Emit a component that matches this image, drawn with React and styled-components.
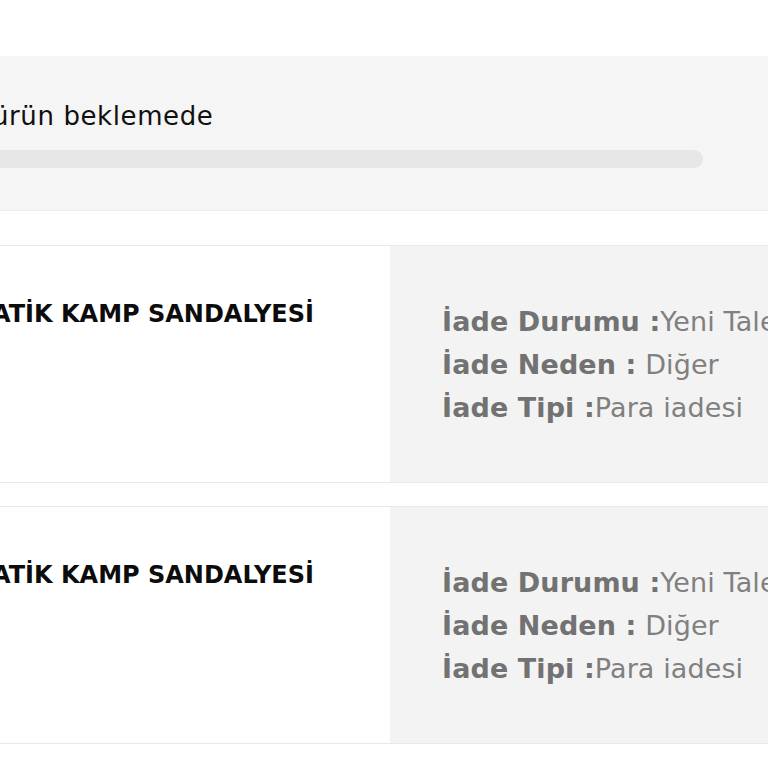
import React from 'react';
import styled, { createGlobalStyle } from 'styled-components';

const GlobalStyle = createGlobalStyle`
  html, body {
    margin: 0;
    padding: 0;
    background: #ffffff;
    overflow: hidden;
  }
  body {
    font-family: "DejaVu Sans", "Open Sans", sans-serif;
  }
`;

// the screenshot is a scrolled view, so the page sits a little left of the window
const Page = styled.div`
  width: 830px;
  margin-left: -8px;
  padding-top: 56px;
  display: flex;
  flex-direction: column;
`;

const StatusPanel = styled.div`
  background-color: #f5f5f5;
  border-bottom: 1px solid #ebebeb;
  height: 155px;
  padding-top: 42px;
  box-sizing: border-box;
  display: flex;
  flex-direction: column;
  gap: 16px;
`;

const StatusText = styled.div`
  font-size: 26px;
  line-height: 36px;
  color: #111111;
  font-weight: 400;
  letter-spacing: 0.6px;
`;

const Progress = styled.div`
  width: 711px;
  height: 18px;
  border-radius: 9px;
  background-color: #e6e6e6;
`;

const List = styled.div`
  margin-top: 34px;
  display: flex;
  flex-direction: column;
  gap: 23px;
`;

const Card = styled.div`
  display: flex;
  height: 238px;
  border-top: 1px solid #e9e9e9;
  border-bottom: 1px solid #e9e9e9;
  box-sizing: border-box;
`;

const ProductCol = styled.div`
  width: 398px;
  background: #ffffff;
  padding-top: 51px;
  box-sizing: border-box;
`;

const ProductName = styled.div`
  font-size: 24px;
  line-height: 34px;
  font-weight: 700;
  color: #0c0c0c;
`;

const InfoCol = styled.div`
  flex: 1;
  background: #f3f3f3;
  padding-left: 52px;
  display: flex;
  flex-direction: column;
  justify-content: center;
`;

const InfoRow = styled.div`
  font-size: 27px;
  line-height: 43px;
  color: #808080;
  white-space: nowrap;
  letter-spacing: 0.1px;
`;

const Label = styled.span`
  font-weight: 700;
  color: #727272;
`;

const returns = [
  { name: 'ATİK KAMP SANDALYESİ', status: 'Yeni Talep', reason: 'Diğer', type: 'Para iadesi' },
  { name: 'ATİK KAMP SANDALYESİ', status: 'Yeni Talep', reason: 'Diğer', type: 'Para iadesi' },
];

const App = () => {
  return (
    <>
      <GlobalStyle />
      <Page>
        <StatusPanel>
          <StatusText>ürün beklemede</StatusText>
          <Progress />
        </StatusPanel>
        <List>
          {returns.map((item, i) => (
            <Card key={i}>
              <ProductCol>
                <ProductName>{item.name}</ProductName>
              </ProductCol>
              <InfoCol>
                <InfoRow><Label>İade Durumu :</Label>{item.status}</InfoRow>
                <InfoRow><Label>İade Neden :</Label> {item.reason}</InfoRow>
                <InfoRow><Label>İade Tipi :</Label>{item.type}</InfoRow>
              </InfoCol>
            </Card>
          ))}
        </List>
      </Page>
    </>
  );
};

export default App;
